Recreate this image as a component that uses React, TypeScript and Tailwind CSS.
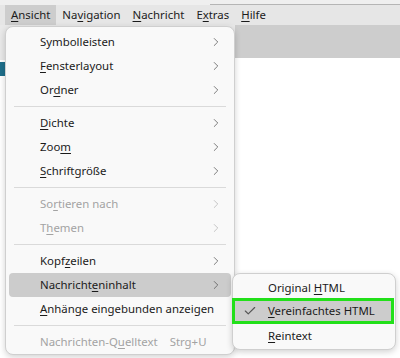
import { ChevronRight, Check } from 'lucide-react';

type Item = {
  label: string;
  u?: number; // index of underlined char
  sub?: boolean;
  disabled?: boolean;
  active?: boolean;
  shortcut?: string;
};

const groups: Item[][] = [
  [
    { label: 'Symbolleisten', sub: true },
    { label: 'Fensterlayout', u: 0, sub: true },
    { label: 'Ordner', u: 2, sub: true },
  ],
  [
    { label: 'Dichte', u: 0, sub: true },
    { label: 'Zoom', u: 3, sub: true },
    { label: 'Schriftgröße', u: 0, sub: true },
  ],
  [
    { label: 'Sortieren nach', u: 2, sub: true, disabled: true },
    { label: 'Themen', u: 1, sub: true, disabled: true },
  ],
  [
    { label: 'Kopfzeilen', u: 4, sub: true },
    { label: 'Nachrichteninhalt', u: 9, sub: true, active: true },
    { label: 'Anhänge eingebunden anzeigen', u: 0 },
  ],
  [{ label: 'Nachrichten-Quelltext', u: 13, disabled: true, shortcut: 'Strg+U' }],
];

// Buchstabe mit Unterstrich (Tastenkürzel)
function Label({ text, u }: { text: string; u?: number }) {
  if (u === undefined) return <span className="whitespace-nowrap">{text}</span>;
  return (
    <span className="whitespace-nowrap">
      {text.slice(0, u)}
      <span className="underline underline-offset-2">{text[u]}</span>
      {text.slice(u + 1)}
    </span>
  );
}

const menubar: { text: string; u: number; open?: boolean }[] = [
  { text: 'Ansicht', u: 0, open: true },
  { text: 'Navigation', u: 2 },
  { text: 'Nachricht', u: 0 },
  { text: 'Extras', u: 1 },
  { text: 'Hilfe', u: 0 },
];

export default function App() {
  return (
    <div
      className="relative w-[400px] h-[358px] overflow-hidden bg-white text-[11.4px] text-[#1b1b1b]"
      style={{ fontFamily: '"Noto Sans", "Liberation Sans", sans-serif' }}
    >
      {/* Fensterrahmen oben */}
      <div className="flex h-[5px] bg-[#efefef]">
        <div className="w-[210px]" />
        <div className="flex-1 border-b border-[#b5b5b5]" />
      </div>

      {/* Menüleiste */}
      <div className="flex h-[20px] items-center bg-[#e6e6e6] pl-[5px]">
        {menubar.map((m) => (
          <div
            key={m.text}
            className={`flex h-full items-center px-[6px] ${m.open ? 'bg-[#cdcdcd]' : ''}`}
          >
            <Label text={m.text} u={m.u} />
          </div>
        ))}
      </div>

      {/* Hintergrund der Anwendung */}
      <div className="flex h-[333px]">
        <div className="flex w-[235px] flex-col bg-white">
          <div className="h-[35px] bg-[#e9e9e9]" />
          <div className="mt-[2px] h-[14px] w-[6px] bg-[#1f6f8b]" />
        </div>
        <div className="flex flex-1 flex-col">
          <div className="h-[33px] bg-[#cdcdcd]" />
          <div className="flex-1 bg-white" />
        </div>
      </div>

      {/* Ansicht-Menü */}
      <div className="absolute left-[5px] top-[26px] w-[230px] rounded-[8px] border border-[#cfcfcf] bg-[#f9f9f9] pt-[3px] shadow-[0_2px_6px_rgba(0,0,0,0.18)]">
        {groups.map((g, gi) => (
          <div key={gi}>
            {gi > 0 && <div className="mx-[8px] my-[4px] h-px bg-[#dadada]" />}
            {g.map((it) => (
              <div
                key={it.label}
                className={`mx-[3px] flex h-[24px] items-center rounded-[4px] pl-[31px] pr-[8px] ${
                  it.active ? 'bg-[#cccccc]' : ''
                } ${it.disabled ? 'text-[#a3a3a3]' : ''}`}
              >
                <Label text={it.label} u={it.u} />
                {it.shortcut && <span className="ml-[12px]">{it.shortcut}</span>}
                <div className="flex-1" />
                {it.sub && (
                  <ChevronRight
                    className={`h-[14px] w-[14px] ${it.disabled ? 'text-[#b5b5b5]' : 'text-[#555]'}`}
                    strokeWidth={1.3}
                  />
                )}
              </div>
            ))}
          </div>
        ))}
      </div>

      {/* Untermenü Nachrichteninhalt */}
      <div className="absolute left-[232px] top-[273px] w-[164px] rounded-[8px] border border-[#cfcfcf] bg-[#f9f9f9] pt-[3px] pb-[1px] shadow-[0_2px_6px_rgba(0,0,0,0.18)]">
        <div className="flex h-[21px] items-center pl-[35px]">
          <Label text="Original HTML" u={9} />
        </div>
        <div className="-ml-[1px] mr-[1px] flex h-[26px] items-center border-[3px] border-[#22e01a] bg-[#cccccc] pl-[8px]">
          <Check className="mr-[11px] h-[14px] w-[14px] text-[#555]" strokeWidth={2} />
          <Label text="Vereinfachtes HTML" u={0} />
        </div>
        <div className="flex h-[24px] items-center pl-[35px]">
          <Label text="Reintext" u={0} />
        </div>
      </div>
    </div>
  );
}
